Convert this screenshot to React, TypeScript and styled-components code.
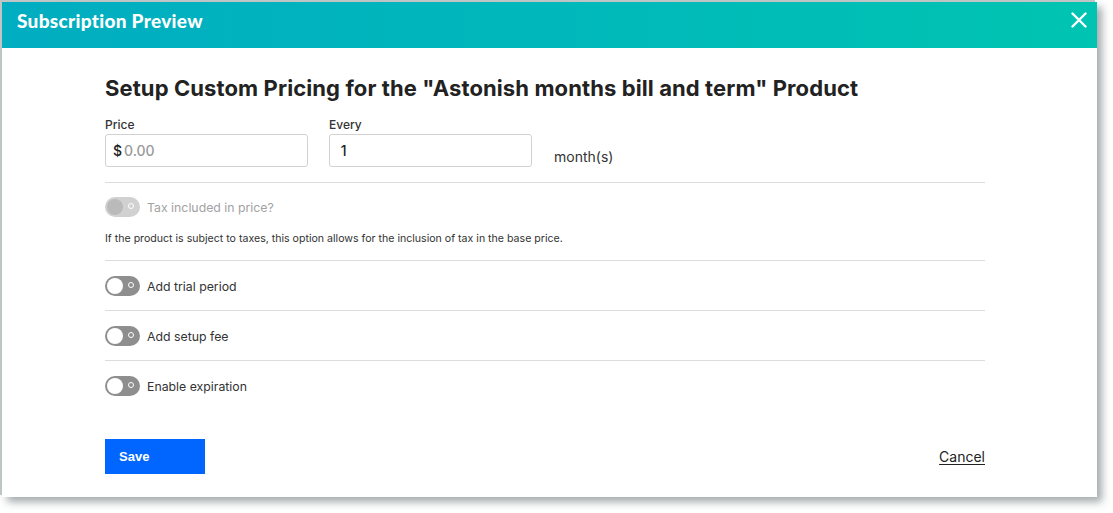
import { FC } from 'react';
import styled, { createGlobalStyle, css } from 'styled-components';

const GlobalStyle = createGlobalStyle`
  html, body {
    margin: 0;
    padding: 0;
    background: #ffffff;
  }
  body {
    font-family: Inter, 'Liberation Sans', sans-serif;
    color: #2b2b2b;
  }
`;

const Page = styled.div`
  width: 1113px;
  height: 513px;
  padding: 2px 0 0 2px;
  box-sizing: border-box;
  overflow: hidden;
`;

const Modal = styled.div`
  width: 1095px;
  height: 495px;
  background: #fff;
  display: flex;
  flex-direction: column;
  box-shadow: -2px -2px 0 #bfc4c5, 5px 5px 8px rgba(90, 100, 105, 0.55);
`;

const Header = styled.div`
  height: 46px;
  box-sizing: border-box;
  flex: none;
  display: flex;
  align-items: center;
  justify-content: space-between;
  padding: 0 6px 10px 15px;
  background: linear-gradient(90deg, #01adc1 0%, #00b8bb 50%, #00c4b1 100%);
`;

const HeaderTitle = styled.h2`
  margin: 0;
  color: #fff;
  font-family: Lato, 'Open Sans', sans-serif;
  font-size: 19px;
  font-weight: 900;
  letter-spacing: 0.3px;
`;

const CloseButton = styled.button`
  border: 0;
  background: none;
  padding: 0;
  width: 24px;
  height: 24px;
  display: flex;
  align-items: center;
  justify-content: center;
  cursor: pointer;
`;

const Body = styled.div`
  flex: 1;
  padding: 26px 112px 0 103px;
  display: flex;
  flex-direction: column;
`;

const Heading = styled.h1`
  margin: 0;
  font-size: 22px;
  font-weight: 700;
  color: #222;
  letter-spacing: 0.1px;
  line-height: 28px;
`;

const FieldRow = styled.div`
  display: flex;
  align-items: flex-end;
  gap: 21px;
  margin-top: 15px;
  padding-bottom: 15px;
  border-bottom: 1px solid #dcdcdc;
`;

const Field = styled.label`
  display: flex;
  flex-direction: column;
  gap: 2px;
  font-size: 12px;
  font-weight: 500;
  color: #333;
`;

const InputBox = styled.div`
  width: 203px;
  height: 33px;
  box-sizing: border-box;
  border: 1px solid #d2d2d2;
  border-radius: 3px;
  display: flex;
  align-items: center;
  padding: 0 7px;
  gap: 2px;
  font-size: 14px;
  color: #222;
`;

const Placeholder = styled.span`
  color: #9a9a9a;
`;

const Unit = styled.span`
  font-size: 14px;
  color: #333;
  padding: 0 0 2px 1px;
`;

const Section = styled.div<{ $last?: boolean; $first?: boolean }>`
  padding: ${p => (p.$first ? '14px 0 13px' : '15px 0 14px')};
  border-bottom: ${p => (p.$last ? 'none' : '1px solid #dcdcdc')};
  display: flex;
  flex-direction: column;
`;

const ToggleLine = styled.div`
  display: flex;
  align-items: center;
  gap: 7px;
`;

const Track = styled.span<{ $disabled?: boolean }>`
  position: relative;
  width: 35px;
  height: 20px;
  border-radius: 10px;
  background: #8e8e8e;
  flex: none;
  ${p => p.$disabled && css`
    opacity: 0.4;
  `}

  &:after {
    content: '';
    position: absolute;
    right: 6px;
    top: 6px;
    width: 6px;
    height: 6px;
    border-radius: 50%;
    border: 1px solid #fff;
    box-sizing: border-box;
  }
`;

const Knob = styled.span<{ $disabled?: boolean }>`
  position: absolute;
  left: 2px;
  top: 2px;
  width: 16px;
  height: 16px;
  border-radius: 50%;
  background: ${p => (p.$disabled ? '#555' : '#fff')};
`;

const ToggleLabel = styled.span<{ $disabled?: boolean }>`
  font-size: 12.3px;
  color: ${p => (p.$disabled ? '#a2a2a2' : '#333')};
`;

const Hint = styled.p`
  margin: 15px 0 2px;
  font-size: 10.6px;
  color: #333;
`;

const Footer = styled.div`
  display: flex;
  align-items: center;
  justify-content: space-between;
  margin-top: 29px;
`;

const SaveButton = styled.button`
  width: 100px;
  height: 35px;
  border: 0;
  background: #0066ff;
  color: #fff;
  font-family: 'Liberation Sans', Arial, sans-serif;
  font-weight: 700;
  font-size: 13px;
  text-align: left;
  padding: 0 14px;
  cursor: pointer;
`;

const CancelLink = styled.a`
  font-size: 14px;
  color: #222;
  text-decoration: underline;
  text-underline-offset: 2px;
  cursor: pointer;
`;

const Toggle: FC<{ label: string; disabled?: boolean }> = ({ label, disabled }) => (
  <ToggleLine>
    <Track $disabled={disabled}>
      <Knob $disabled={disabled} />
    </Track>
    <ToggleLabel $disabled={disabled}>{label}</ToggleLabel>
  </ToggleLine>
);

const App: FC = () => {
  return <>
    <GlobalStyle />
    <Page>
      <Modal>
        <Header>
          <HeaderTitle>Subscription Preview</HeaderTitle>
          <CloseButton aria-label="Close">
            <svg width="16" height="16" viewBox="0 0 16 16">
              <path d="M1.5 1.5 L14.5 14.5 M14.5 1.5 L1.5 14.5" stroke="#fff" strokeWidth="2.4" strokeLinecap="round" />
            </svg>
          </CloseButton>
        </Header>
        <Body>
          <Heading>Setup Custom Pricing for the "Astonish months bill and term" Product</Heading>
          <FieldRow>
            <Field>
              Price
              <InputBox>$ <Placeholder>0.00</Placeholder></InputBox>
            </Field>
            <Field>
              Every
              <InputBox>&nbsp;1</InputBox>
            </Field>
            <Unit>month(s)</Unit>
          </FieldRow>
          <Section $first>
            <Toggle label="Tax included in price?" disabled />
            <Hint>If the product is subject to taxes, this option allows for the inclusion of tax in the base price.</Hint>
          </Section>
          <Section><Toggle label="Add trial period" /></Section>
          <Section><Toggle label="Add setup fee" /></Section>
          <Section $last><Toggle label="Enable expiration" /></Section>
          <Footer>
            <SaveButton>Save</SaveButton>
            <CancelLink>Cancel</CancelLink>
          </Footer>
        </Body>
      </Modal>
    </Page>
  </>;
};

export default App;
